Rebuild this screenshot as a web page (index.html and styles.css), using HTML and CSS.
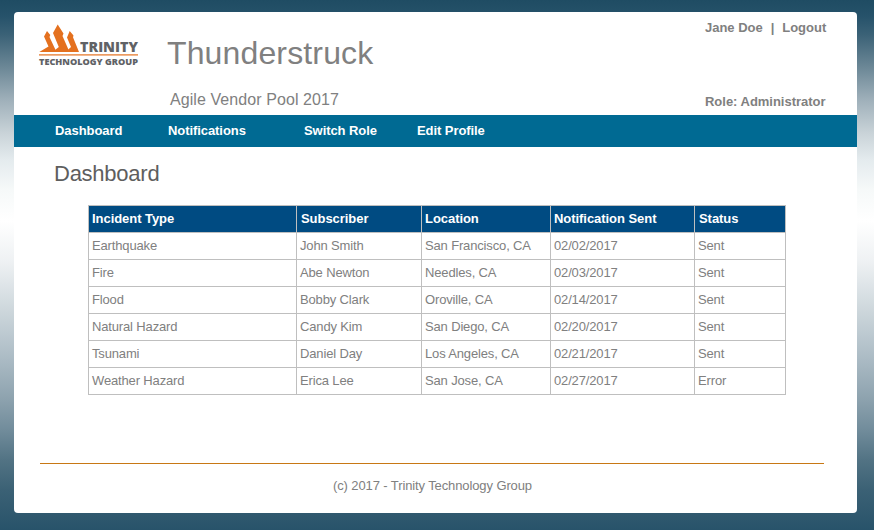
FILE: index.html
```html
<!DOCTYPE html>
<html lang="en">
<head>
<meta charset="utf-8">
<title>Thunderstruck</title>
<link rel="stylesheet" href="styles.css">
</head>
<body>
<div class="panel">
  <header class="header">
    <svg class="logo" width="102" height="46" viewBox="0 0 102 46" role="img" aria-label="Trinity Technology Group">
      <path class="flame" d="M1.3 29 L10.500 23.500 L6 13.500 L9 8 L12.300 12 L11.500 14 L18.500 29 Z"/>
      <path class="flame" d="M14.500 29 L20.800 24 L15 10 L19.700 1.500 L25.500 10.500 L24.500 13 L31.500 29 Z"/>
      <path class="flame" d="M27.500 29 L33 24 L29 14.500 L31.700 8 L35.500 12.500 L35 14.300 L41 29 Z"/>
      <rect class="flame" x="1" y="31.300" width="99" height="1.200"/>
      <text class="brand" x="42" y="29" textLength="58" lengthAdjust="spacingAndGlyphs">TRINITY</text>
      <text class="brand-sub" x="1" y="41.700" textLength="99" lengthAdjust="spacingAndGlyphs">TECHNOLOGY GROUP</text>
    </svg>
    <div class="titles">
      <h1>Thunderstruck</h1>
      <p>Agile Vendor Pool 2017</p>
    </div>
    <div class="account">
      <div class="links"><a>Jane Doe</a><span>|</span><a>Logout</a></div>
      <div class="role">Role: Administrator</div>
    </div>
  </header>
  <nav class="nav"><a>Dashboard</a><a>Notifications</a><a>Switch Role</a><a>Edit Profile</a></nav>
  <main>
    <h2>Dashboard</h2>
    <table>
      <colgroup><col class="c1"><col class="c2"><col class="c3"><col class="c4"><col class="c5"></colgroup>
      <thead><tr><th>Incident Type</th><th>Subscriber</th><th>Location</th><th>Notification Sent</th><th>Status</th></tr></thead>
      <tbody>
        <tr><td>Earthquake</td><td>John Smith</td><td>San Francisco, CA</td><td>02/02/2017</td><td>Sent</td></tr>
        <tr><td>Fire</td><td>Abe Newton</td><td>Needles, CA</td><td>02/03/2017</td><td>Sent</td></tr>
        <tr><td>Flood</td><td>Bobby Clark</td><td>Oroville, CA</td><td>02/14/2017</td><td>Sent</td></tr>
        <tr><td>Natural Hazard</td><td>Candy Kim</td><td>San Diego, CA</td><td>02/20/2017</td><td>Sent</td></tr>
        <tr><td>Tsunami</td><td>Daniel Day</td><td>Los Angeles, CA</td><td>02/21/2017</td><td>Sent</td></tr>
        <tr><td>Weather Hazard</td><td>Erica Lee</td><td>San Jose, CA</td><td>02/27/2017</td><td>Error</td></tr>
      </tbody>
    </table>
  </main>
  <footer>(c) 2017 - Trinity Technology Group</footer>
</div>
</body>
</html>
```
FILE: styles.css
```css
* { box-sizing: border-box; }
body {
  margin: 0;
  height: 530px;
  padding: 12px 17px 17px 14px;
  overflow: hidden;
  font: 13px/15px "Liberation Sans", Arial, sans-serif;
  color: #808080;
  background: linear-gradient(#1f4c63 0, #26526a 16px, #3b6277 35px, #6b8796 67px, #9fb0ba 100px, #c9d3d8 133px, #e4ebee 160px, #f6f9f9 190px, #fff 221px, #eef1f3 262px, #ccd6db 312px, #b0bfc8 352px, #8ea3af 398px, #718c9b 430px, #527384 460px, #3b6175 490px, #28536a 530px);
}
h1, h2, p { margin: 0; font-weight: normal; }
.panel { height: 501px; background: #fff; border-radius: 4px; display: flex; flex-direction: column; }
.header { height: 103px; display: flex; padding-left: 24px; flex: none; }
.logo { margin-top: 11px; flex: none; }
.flame { fill: #e4711f; }
.brand, .brand-sub { font-family: "Open Sans", sans-serif; font-weight: 800; fill: #606265; }
.brand { font-size: 14px; }
.brand-sub { font-size: 9px; }
.titles { margin-left: 27px; width: 538px; }
.titles h1 { font-size: 32px; line-height: 36px; margin-top: 23px; letter-spacing: 0.14px; }
.titles p { font-size: 16px; line-height: 18px; margin: 20px 0 0 3px; letter-spacing: 0.08px; }
.account { font-weight: bold; padding-top: 8px; letter-spacing: -0.02px; }
.links { display: flex; gap: 8px; }
.role { margin-top: 59px; }
.nav { height: 32px; flex: none; background: #006a93; color: #fff; font-weight: bold; display: flex; padding: 8px 0 0 41px; letter-spacing: -0.07px; }
.nav a:nth-child(1) { width: 113px; }
.nav a:nth-child(2) { width: 136px; }
.nav a:nth-child(3) { width: 113px; }
main { padding: 14px 0 0 40px; height: 316px; }
h2 { font-size: 22px; line-height: 25px; color: #5e5e5e; letter-spacing: -0.25px; }
table { border-collapse: collapse; table-layout: fixed; width: 698px; margin: 19px 0 0 34px; }
th, td { border: 1px solid #bfbfbf; height: 27px; padding: 0 3px 2px; text-align: left; letter-spacing: -0.15px; }
th { background: #004b82; color: #fff; letter-spacing: -0.05px; }
th:nth-child(2), th:nth-child(5) { padding-left: 4px; }
.c1 { width: 208px; } .c2 { width: 125px; } .c3 { width: 129px; } .c4 { width: 144px; } .c5 { width: 91px; }
footer { margin: 0 33px 0 26px; border-top: 1px solid #c87814; padding: 14px 0 0 1px; text-align: center; letter-spacing: -0.11px; }
```
